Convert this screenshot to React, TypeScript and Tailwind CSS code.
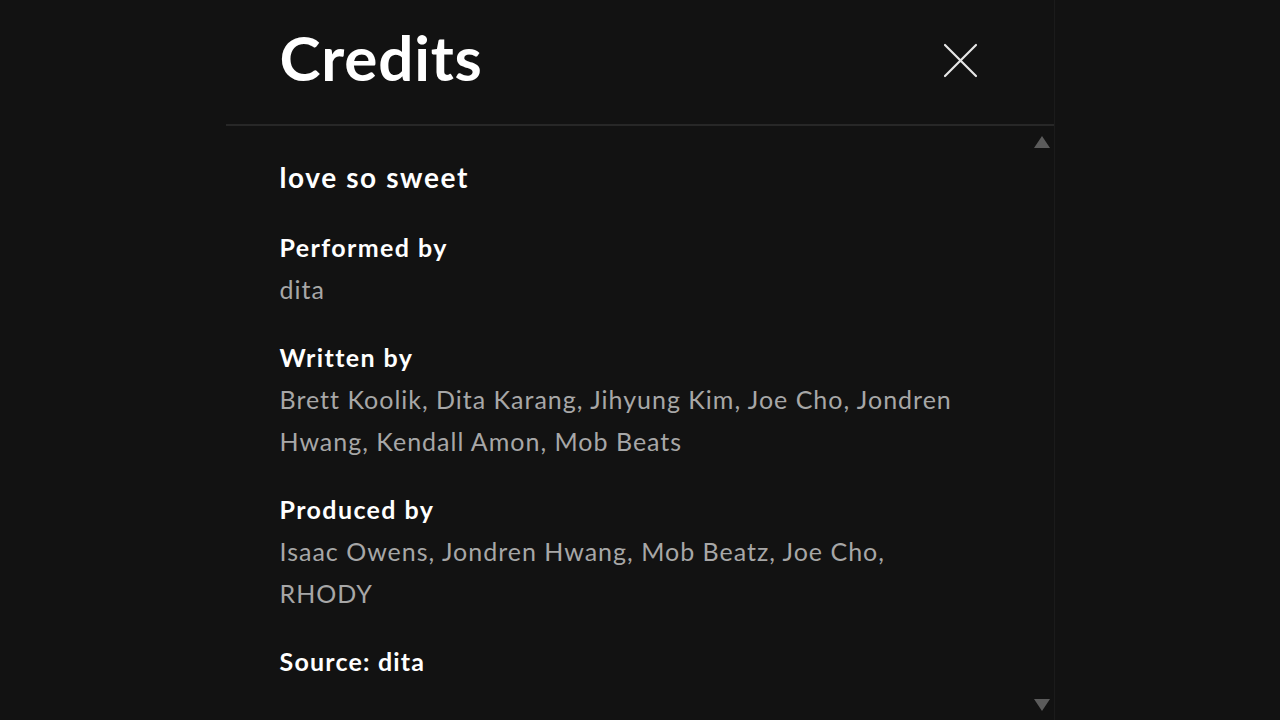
import React from 'react';

const sections = [
  { label: 'Performed by', names: 'dita' },
  { label: 'Written by', names: 'Brett Koolik, Dita Karang, Jihyung Kim, Joe Cho, Jondren Hwang, Kendall Amon, Mob Beats' },
  { label: 'Produced by', names: 'Isaac Owens, Jondren Hwang, Mob Beatz, Joe Cho, RHODY' },
];

export default function App() {
  return (
    <div className="w-full h-[720px] bg-[#121212] flex justify-center overflow-hidden" style={{ fontFamily: 'Lato, "Noto Sans", sans-serif' }}>
      <div className="w-[829px] h-full flex flex-col border-r border-[#1b1b1b]">
        {/* header */}
        <div className="h-[126px] shrink-0 border-b-2 border-[#272727] flex items-start justify-between pl-[54px] pr-[76px]">
          <h1 className="text-[62px] leading-none font-bold text-white tracking-[0.8px] mt-[26px]">Credits</h1>
          <button className="mt-[43px] w-[35px] h-[35px] text-[#e6e6e6]">
            <svg viewBox="0 0 35 35" className="w-full h-full" fill="none" stroke="currentColor" strokeWidth="2.2" strokeLinecap="round">
              <path d="M2 2 L33 33 M33 2 L2 33" />
            </svg>
          </button>
        </div>

        {/* body + scrollbar */}
        <div className="flex-1 flex min-h-0">
          <div className="flex-1 pl-[54px] pt-[32px]">
            <h2 className="text-[28px] leading-[38px] font-bold text-white tracking-[1.6px]">love so sweet</h2>
            <div className="mt-[30px] flex flex-col gap-[26px]">
              {sections.map((s) => (
                <div key={s.label} className="pr-[70px]">
                  <h3 className="text-[25px] leading-[42px] font-bold text-white tracking-[1.4px]">{s.label}</h3>
                  <p className="text-[25px] leading-[42px] text-[#a7a7a7] tracking-[1px]">{s.names}</p>
                </div>
              ))}
              <h3 className="text-[25px] leading-[42px] font-bold text-white tracking-[1.2px]">Source: dita</h3>
            </div>
          </div>
          <div className="w-[24px] shrink-0 flex flex-col justify-between items-center pb-[8px] pt-[9px]">
            <svg viewBox="0 0 18 14" className="w-[18px] h-[14px] text-[#5b5b5b]" fill="currentColor">
              <path d="M9 1 L17 13 L1 13 Z" />
            </svg>
            <svg viewBox="0 0 18 14" className="w-[18px] h-[14px] text-[#5b5b5b]" fill="currentColor">
              <path d="M1 1 L17 1 L9 13 Z" />
            </svg>
          </div>
        </div>
      </div>
    </div>
  );
}
